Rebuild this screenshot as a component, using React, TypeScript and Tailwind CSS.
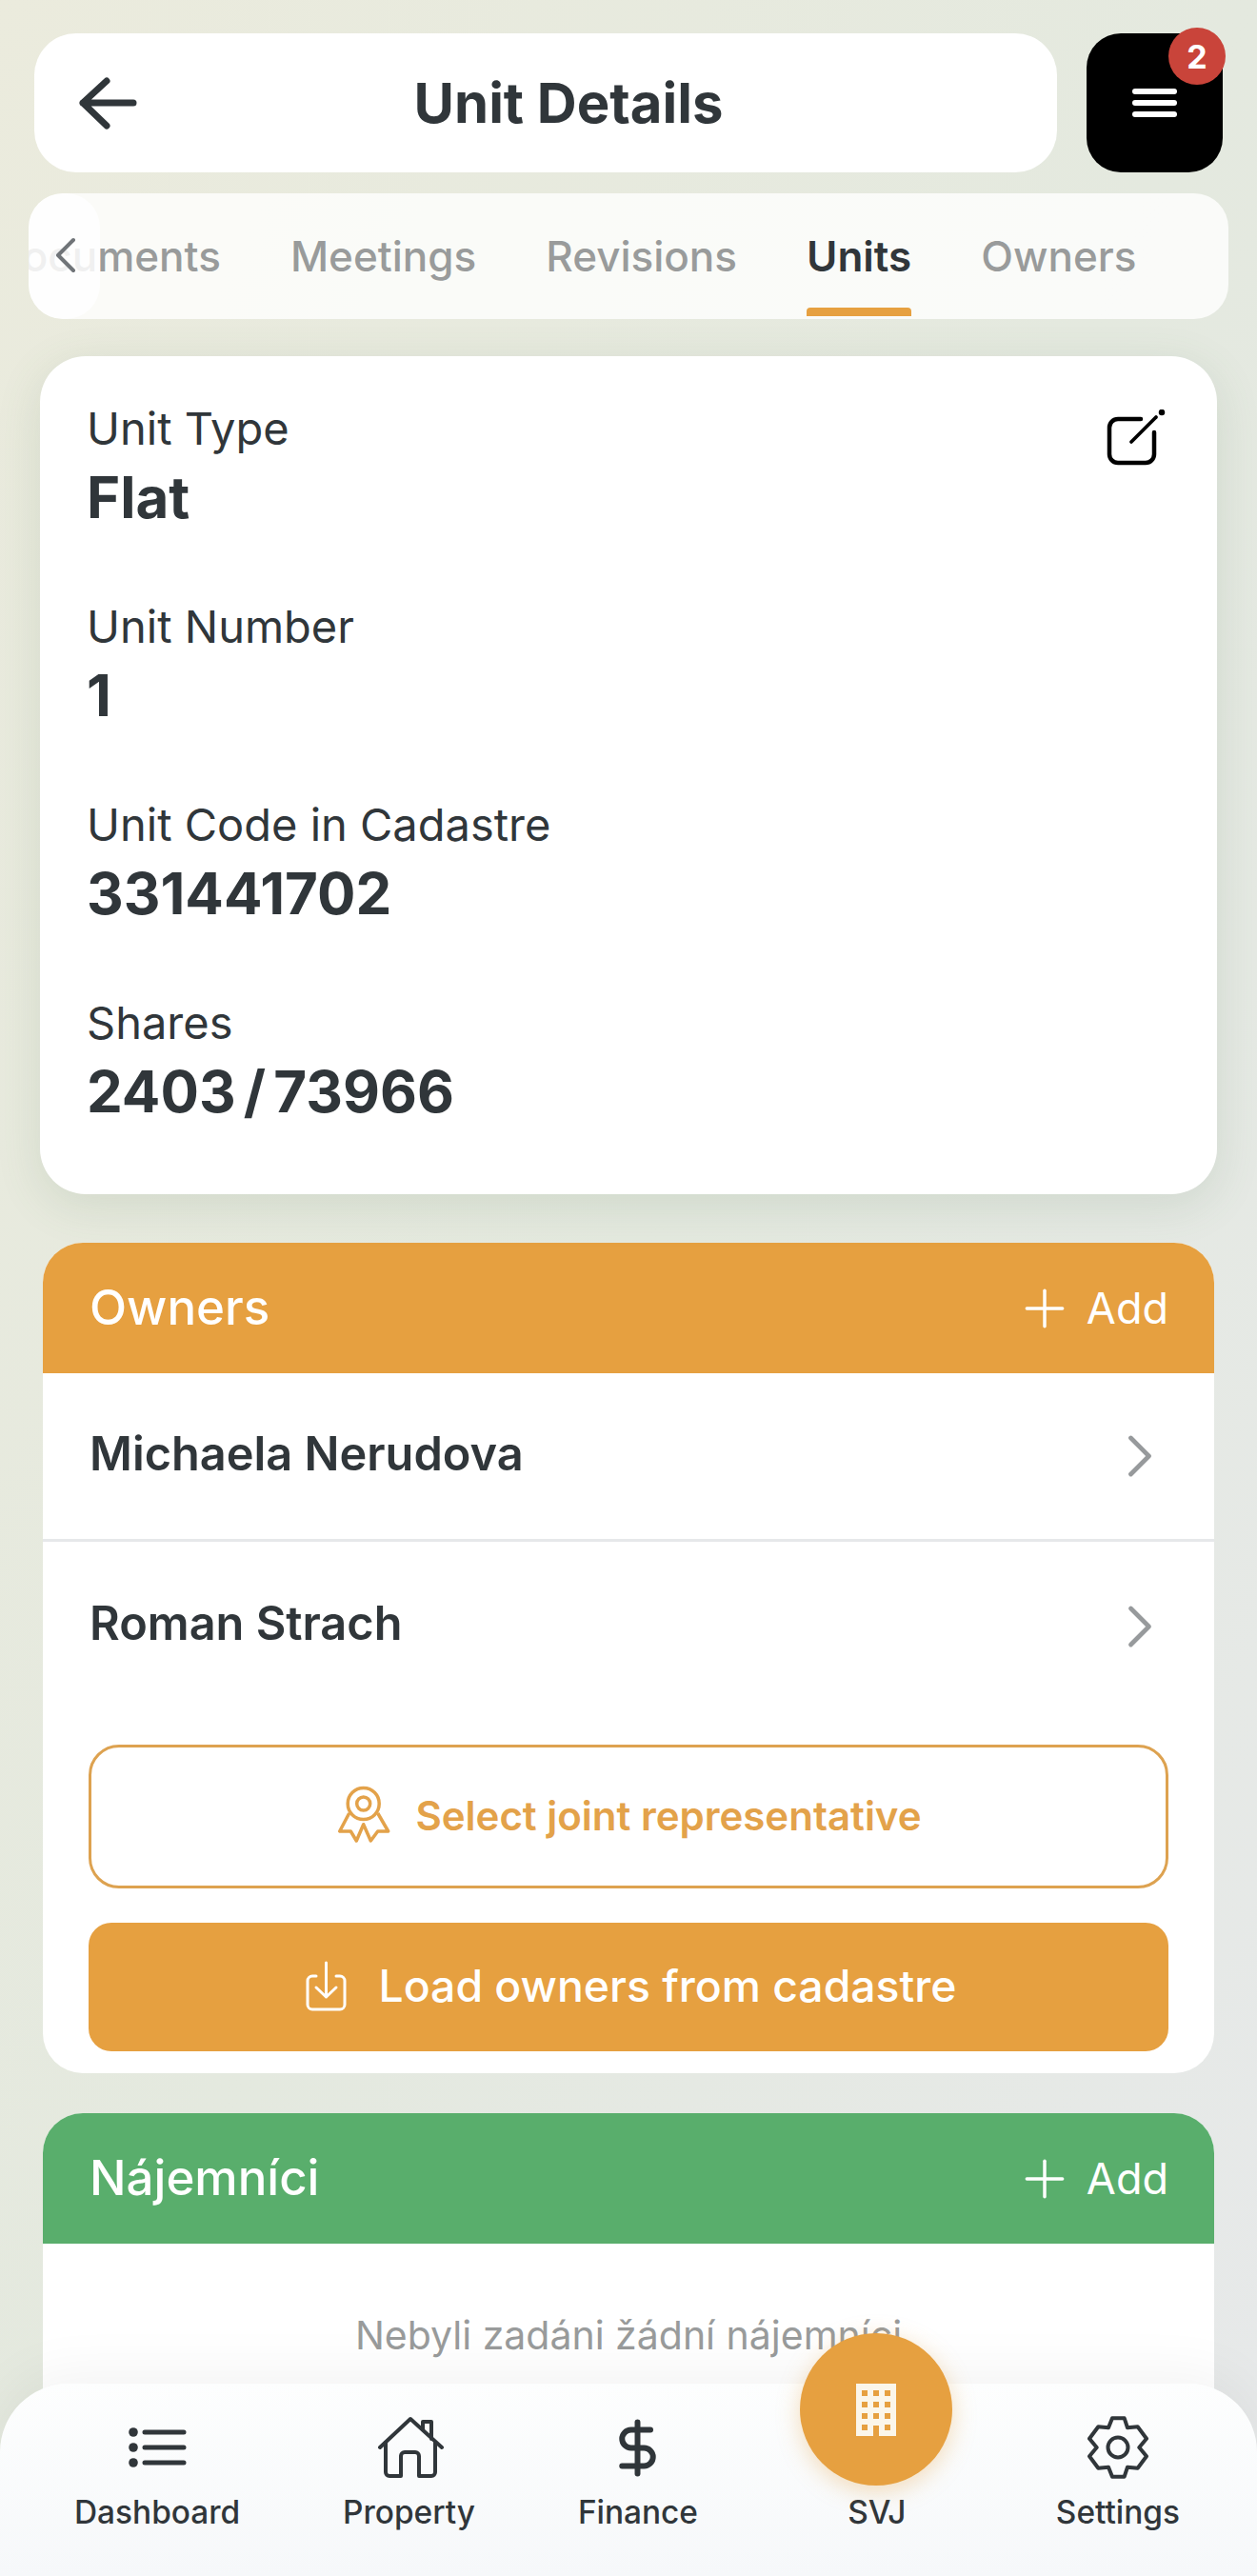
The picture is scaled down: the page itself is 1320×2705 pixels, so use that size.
import { ChevronLeft, ChevronRight, Plus, DollarSign } from 'lucide-react';
import type { ReactNode } from 'react';

const font = "font-['Inter',sans-serif]";

function Field({ label, value }: { label: string; value: string }) {
  return (
    <div className="h-[208px]">
      <div className="text-[47px] leading-[56px] text-[#30363a]">{label}</div>
      <div className="mt-[9px] text-[60px] leading-[70px] font-bold text-[#30363a] [word-spacing:-6px]">{value}</div>
    </div>
  );
}

function SectionHeader({ title, color }: { title: string; color: string }) {
  return (
    <div className={`h-[137px] ${color} px-[49px] flex items-center justify-between text-white`}>
      <span className="text-[51px] font-medium">{title}</span>
      <span className="flex items-center gap-[12px] text-[45px] -mr-[1px]">
        <Plus className="w-[64px] h-[64px]" strokeWidth={1.3} />
        Add
      </span>
    </div>
  );
}

function OwnerRow({ name, border }: { name: string; border?: boolean }) {
  return (
    <div className={`h-[177px] pl-[49px] pr-[40px] flex items-center justify-between ${border ? 'border-b-[3px] border-[#e6e8ea]' : ''}`}>
      <span className="pb-[5px] text-[48.7px] font-semibold text-[#30363a]">{name}</span>
      <ChevronRight className="w-[76px] h-[76px] text-[#979a9c]" strokeWidth={1.5} />
    </div>
  );
}

function NavItem({ label, icon }: { label: string; icon: ReactNode }) {
  return (
    <div className="flex flex-col items-center">
      <div className="h-[72px] flex items-center justify-center text-[#30363a]">{icon}</div>
      <div className="mt-[12px] text-[33.4px] leading-[40px] font-medium text-[#30363a]">{label}</div>
    </div>
  );
}

export default function App() {
  return (
    <div className={`${font} relative w-[1320px] h-[2705px] overflow-hidden bg-gradient-to-br from-[#ebebdd] via-[#e4e9df] to-[#e7e9ea]`}>
      {/* Header */}
      <div className="flex px-[36px] pt-[35px] gap-[31px]">
        <div className="relative w-[1074px] h-[146px] pl-[48px] bg-white rounded-[44px] flex items-center justify-center">
          <svg viewBox="0 0 67 64" className="absolute left-[44px] top-[41px] w-[67px] h-[64px] text-[#30363a]" fill="none" stroke="currentColor" strokeWidth="7" strokeLinecap="round" strokeLinejoin="round">
            <path d="M32 9 L7 32 L32 56 M7 32 H60" />
          </svg>
          <span className="text-[58px] font-bold text-[#30363a]">Unit Details</span>
        </div>
        <div className="relative w-[143px] h-[146px] bg-black rounded-[36px] flex items-center justify-center">
          <div className="flex flex-col gap-[6px]">
            <div className="w-[47px] h-[6px] bg-white rounded-full" />
            <div className="w-[47px] h-[6px] bg-white rounded-full" />
            <div className="w-[47px] h-[6px] bg-white rounded-full" />
          </div>
          <div className="absolute -top-[6px] -right-[3px] w-[60px] h-[60px] rounded-full bg-[#c9443a] text-white text-[34px] font-bold flex items-center justify-center">2</div>
        </div>
      </div>

      {/* Tabs */}
      <div className="relative mx-[30px] mt-[22px] h-[132px] rounded-[36px] bg-white/80 overflow-hidden flex text-[44px] font-medium text-[#999b9b]">
        <div className="flex gap-[73px] pt-[33px] whitespace-nowrap -ml-[38px]">
          <span>Documents</span>
          <span>Meetings</span>
          <span>Revisions</span>
          <span className="relative text-[#30363a] font-semibold">
            Units
            <span className="absolute left-0 right-0 top-[87px] h-[9px] rounded-t-[4px] bg-[#e6a040]" />
          </span>
          <span>Owners</span>
        </div>
        <div className="absolute left-0 top-0 bottom-0 w-[75px] bg-white/85 rounded-[36px] flex items-center">
          <ChevronLeft className="w-[64px] h-[64px] ml-[7px] -mt-[2px] text-[#707478]" strokeWidth={1.5} />
        </div>
      </div>

      {/* Unit info */}
      <div className="relative mx-[42px] mt-[39px] h-[880px] bg-white rounded-[48px] pl-[49px] pr-[50px] pt-[48px] shadow-[0_12px_48px_rgba(80,110,80,0.14)]">
        <svg viewBox="0 0 66 66" className="absolute right-[52px] top-[56px] w-[66px] h-[66px] text-black" fill="none" stroke="currentColor" strokeLinecap="round">
          <path d="M38 10 H14 a9 9 0 0 0 -9 9 V47 a9 9 0 0 0 9 9 H43 a9 9 0 0 0 9 -9 V24" strokeWidth="4.5" />
          <path d="M28 34 L54 8" strokeWidth="3.8" />
          <path d="M60 3 h.01" strokeWidth="6.5" />
        </svg>
        <Field label="Unit Type" value="Flat" />
        <Field label="Unit Number" value="1" />
        <Field label="Unit Code in Cadastre" value="331441702" />
        <Field label="Shares" value="2403 / 73966" />
      </div>

      {/* Owners */}
      <div className="mx-[45px] mt-[51px] h-[872px] bg-white rounded-[42px] overflow-hidden">
        <SectionHeader title="Owners" color="bg-[#e6a040]" />
        <OwnerRow name="Michaela Nerudova" border />
        <OwnerRow name="Roman Strach" />
        <div className="px-[48px] pt-[36px]">
          <div className="h-[151px] pb-[3px] border-[3px] border-[#dda250] rounded-[32px] flex items-center justify-center gap-[22px] text-[42px] font-semibold text-[#e3a24a]">
            <svg viewBox="0 0 64 64" className="w-[64px] h-[64px] -ml-[2px]" fill="none" stroke="currentColor" strokeWidth="3.5" strokeLinejoin="round">
              <circle cx="31.7" cy="20" r="16.5" />
              <circle cx="31.7" cy="20" r="7" />
              <path d="M16.7 30 L6.7 49 H18.3 L24.3 59 L31.7 41.7 L39.3 59 L46.7 49 H57.7 L46.7 30" />
            </svg>
            Select joint representative
          </div>
          <div className="mt-[36px] h-[135px] pb-[2px] pl-[3px] bg-[#e6a040] rounded-[24px] flex items-center justify-center gap-[31px] text-[46.3px] font-medium text-white">
            <svg viewBox="0 0 48 58" className="w-[48px] h-[58px]" fill="none" stroke="currentColor" strokeWidth="3" strokeLinecap="round" strokeLinejoin="round">
              <path d="M13 18 H9 a5 5 0 0 0 -5 5 V48 a5 5 0 0 0 5 5 H38 a5 5 0 0 0 5 -5 V23 a5 5 0 0 0 -5 -5 H34" />
              <path d="M23.5 4 V40 M13 30 L23.5 40 L34 30" />
            </svg>
            Load owners from cadastre
          </div>
        </div>
      </div>

      {/* Tenants */}
      <div className="mx-[45px] mt-[42px] h-[600px] bg-white rounded-[42px] overflow-hidden">
        <SectionHeader title="Nájemníci" color="bg-[#59ae6c]" />
        <div className="pt-[66px] text-center text-[41px] text-[#999b9b]">Nebyli zadáni žádní nájemníci</div>
      </div>

      {/* Bottom nav */}
      <div className="absolute left-0 right-0 bottom-0 h-[202px] bg-gradient-to-b from-[#fdfefe] to-[#f6f8fa] rounded-t-[72px] shadow-[0_-10px_60px_rgba(0,0,0,0.05)] flex items-start justify-between pl-[78px] pr-[81px] pt-[31px]">
        <NavItem label="Dashboard" icon={
          <svg viewBox="0 0 62 42" className="w-[62px] h-[42px]" fill="none" stroke="currentColor" strokeWidth="5" strokeLinecap="round">
            <path d="M18 5 H59 M18 21 H59 M18 37 H59" />
            <circle cx="6" cy="5" r="4.8" fill="currentColor" stroke="none" />
            <circle cx="6" cy="21" r="4.8" fill="currentColor" stroke="none" />
            <circle cx="6" cy="37" r="4.8" fill="currentColor" stroke="none" />
          </svg>
        } />
        <NavItem label="Property" icon={
          <svg viewBox="0 0 72 72" className="w-[72px] h-[72px]" fill="none" stroke="currentColor" strokeWidth="4" strokeLinejoin="round" strokeLinecap="round">
            <path d="M5 36 L37 6 L70 36" />
            <path d="M11 31 V62 a4 4 0 0 0 4 4 H27 V45 a4 4 0 0 1 4 -4 H42 a4 4 0 0 1 4 4 V66 H59 a4 4 0 0 0 4 -4 V31" />
            <path d="M50 17 V9 H59 V27" />
          </svg>
        } />
        <NavItem label="Finance" icon={<DollarSign className="w-[65px] h-[65px]" strokeWidth={2.2} />} />
        <div className="relative w-[160px] flex flex-col items-center">
          {/* SVJ button */}
          <div className="absolute -left-[1px] -top-[84px] w-[160px] h-[160px] rounded-full bg-[#e6a040] shadow-[0_6px_24px_rgba(230,160,64,0.35)] flex items-center justify-center">
            <svg viewBox="0 0 42 55" className="w-[42px] h-[55px] text-[#fbf6ea]" fill="currentColor" fillRule="evenodd">
              <path d="M0 0 H42 V55 H24 V44 H18 V55 H0 Z M6 7 V13 H12 V7 Z M18 7 V13 H24 V7 Z M30 7 V13 H36 V7 Z M6 19 V25 H12 V19 Z M18 19 V25 H24 V19 Z M30 19 V25 H36 V19 Z M6 31 V37 H12 V31 Z M18 31 V37 H24 V31 Z M30 31 V37 H36 V31 Z M6 43 V49 H12 V43 Z M30 43 V49 H36 V43 Z" />
            </svg>
          </div>
          <div className="h-[72px]" />
          <div className="mt-[12px] text-[33.4px] leading-[40px] font-medium text-[#30363a]">SVJ</div>
        </div>
        <NavItem label="Settings" icon={
          <svg viewBox="0 0 72 72" className="w-[72px] h-[72px]" fill="none" stroke="currentColor" strokeWidth="4" strokeLinejoin="round">
            <path d="M30 5.3 H42.7 L46 15.3 L56.7 14.3 L66 26.7 L58.3 36 L66 45.3 L56.7 57.7 L46 56.7 L42.7 66.7 H30 L26 56.7 L15.3 57.7 L6 45.3 L13.7 36 L6 26.7 L15.3 14.3 L26 15.3 Z" />
            <circle cx="36" cy="36" r="10.5" />
          </svg>
        } />
      </div>
    </div>
  );
}
